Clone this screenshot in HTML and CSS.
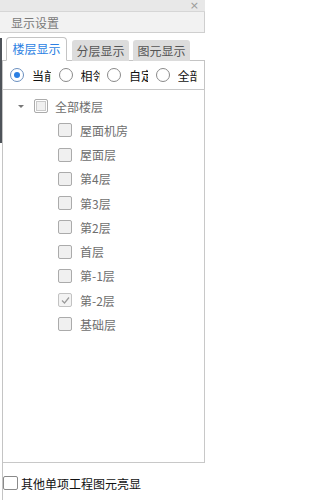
FILE: index.html
```html
<!DOCTYPE html>
<html lang="zh">
<head>
<meta charset="utf-8">
<title>显示设置</title>
<link rel="stylesheet" href="styles.css">
</head>
<body>
<div class="strip"></div>
<div class="topbar"><span class="close">×</span></div>
<div class="title">显示设置</div>
<div class="tabs">
  <div class="tab active">楼层显示</div>
  <div class="tab">分层显示</div>
  <div class="tab">图元显示</div>
</div>
<div class="panel">
  <div class="radios">
    <div class="radio-opt"><span class="radio checked"></span><span class="rlabel">当前</span></div>
    <div class="radio-opt"><span class="radio"></span><span class="rlabel">相邻</span></div>
    <div class="radio-opt"><span class="radio"></span><span class="rlabel">自定</span></div>
    <div class="radio-opt"><span class="radio"></span><span class="rlabel">全部</span></div>
  </div>
  <div class="tree">
    <div class="row root"><span class="arrow"></span><span class="cb dbl"></span><span class="txt">全部楼层</span></div>
    <div class="row child"><span class="cb"></span><span class="txt">屋面机房</span></div>
    <div class="row child"><span class="cb"></span><span class="txt">屋面层</span></div>
    <div class="row child"><span class="cb"></span><span class="txt">第4层</span></div>
    <div class="row child"><span class="cb"></span><span class="txt">第3层</span></div>
    <div class="row child"><span class="cb"></span><span class="txt">第2层</span></div>
    <div class="row child"><span class="cb"></span><span class="txt">首层</span></div>
    <div class="row child"><span class="cb"></span><span class="txt">第-1层</span></div>
    <div class="row child"><span class="cb checked"><svg width="11" height="11" viewBox="0 0 11 11"><path d="M2 5.5 L4.5 8 L9 2.5" fill="none" stroke="#9a9a9a" stroke-width="1.2"/></svg></span><span class="txt">第-2层</span></div>
    <div class="row child"><span class="cb"></span><span class="txt">基础层</span></div>
  </div>
  <div class="footer"><span class="fcb"></span><span class="ftxt">其他单项工程图元亮显</span></div>
</div>
</body>
</html>
```
FILE: styles.css
```css
* { box-sizing: border-box; }
html, body { margin: 0; padding: 0; }
body {
  width: 205px;
  height: 501px;
  background: #fff;
  font-family: "Noto Sans CJK SC", "Microsoft YaHei", sans-serif;
  font-size: 12px;
  position: relative;
  overflow: hidden;
}
.strip {
  position: absolute;
  left: 0;
  top: 38px;
  width: 2px;
  height: 105px;
  background: #4e5359;
}
.topbar {
  height: 12px;
  background: #e8e8e8;
  border-bottom: 1px solid #d6d6d6;
  display: flex;
  justify-content: flex-end;
  align-items: center;
  padding-right: 6px;
}
.close {
  color: #9a9a9a;
  font-family: "DejaVu Sans", sans-serif;
  font-size: 11px;
  line-height: 11px;
}
.title {
  height: 21px;
  background: #f2f2f2;
  border-right: 1px solid #cfcfcf;
  border-bottom: 1px solid #cfcfcf;
  padding-left: 11px;
  color: #7a7a7a;
  line-height: 21px;
}
.tabs {
  display: flex;
  align-items: flex-end;
  gap: 4px;
  padding-left: 6px;
  margin-top: 4px;
  height: 24px;
  position: relative;
  z-index: 1;
}
.tab {
  height: 21px;
  padding: 0;
  background: #dcdcdc;
  color: #555;
  line-height: 21px;
  border-radius: 3px 3px 0 0;
  width: 57px;
  text-align: center;
  white-space: nowrap;
}
.tab.active {
  height: 24px;
  width: 61px;
  background: #fff;
  color: #2b7fe3;
  border: 1px solid #c4c4c4;
  border-bottom: 1px solid #fff;
  border-radius: 4px 4px 0 0;
  line-height: 22px;
  margin-right: 1px;
}
.panel {
  margin-left: 2px;
  border-left: 1px solid #c4c4c4;
  border-top: 1px solid #c4c4c4;
  margin-top: -1px;
  height: 440px;
  display: flex;
  flex-direction: column;
}
.radios {
  height: 28px;
  display: flex;
  align-items: center;
  padding-left: 7px;
  border-right: 1px solid #c4c4c4;
}
.radio-opt {
  width: 49px;
  display: flex;
  align-items: center;
}
.radio {
  width: 14px;
  height: 14px;
  border: 1px solid #8a8a8a;
  border-radius: 50%;
  background: #fff;
  display: flex;
  align-items: center;
  justify-content: center;
  flex: none;
}
.radio.checked { border-color: #6a8fbf; }
.radio.checked::after {
  content: "";
  width: 6px;
  height: 6px;
  border-radius: 50%;
  background: #2b7fe3;
}
.rlabel {
  margin-left: 8px;
  width: 19px;
  overflow: hidden;
  white-space: nowrap;
  color: #111;
  font-size: 12px;
  flex: none;
}
.tree {
  height: 374px;
  border-top: 1px solid #c8c8c8;
  border-bottom: 1px solid #c8c8c8;
  border-right: 1px solid #c8c8c8;
  padding-top: 4px;
}
.row {
  height: 24.25px;
  display: flex;
  align-items: center;
  color: #6e6e6e;
}
.root { padding-left: 15px; }
.child { padding-left: 55px; }
.arrow {
  width: 0;
  height: 0;
  border-left: 3px solid transparent;
  border-right: 3px solid transparent;
  border-top: 3px solid #777;
  margin-right: 10px;
}
.cb {
  width: 14px;
  height: 14px;
  border: 1px solid #ababab;
  border-radius: 2px;
  background: #f0f0f0;
  margin-right: 8px;
  flex: none;
  display: flex;
  align-items: center;
  justify-content: center;
}
.cb.dbl {
  box-shadow: inset 0 0 0 1px #fff, inset 0 0 0 2px #c9c9c9;
  margin-right: 7px;
}
.cb.checked { background: #f3f3f3; border-color: #c2c2c2; }
.footer {
  flex: 1;
  display: flex;
  align-items: center;
  padding-top: 3px;
}
.fcb {
  width: 15px;
  height: 14px;
  border: 1px solid #8a8a8a;
  border-radius: 2px;
  background: #fff;
  margin-right: 3px;
}
.ftxt { color: #111; }
```
